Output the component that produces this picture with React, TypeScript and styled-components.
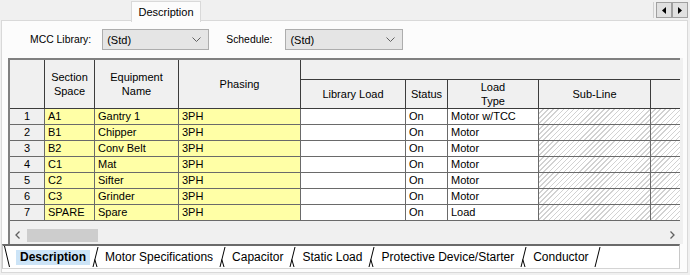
import styled, { createGlobalStyle } from 'styled-components';

const GlobalStyle = createGlobalStyle`
  html, body {
    margin: 0;
    padding: 0;
    background: #f0f0f0;
  }
  body {
    font-family: "Liberation Sans", Arial, sans-serif;
    font-size: 11px;
    color: #000;
  }
`;

const Screen = styled.div`
  width: 690px;
  height: 275px;
  overflow: hidden;
  background: #f0f0f0;
`;

// Top tab strip
const TopStrip = styled.div`
  height: 20px;
  display: flex;
  align-items: flex-start;
`;

const TopTab = styled.div`
  position: relative;
  z-index: 1;
  margin: 1px 0 0 131px;
  width: 70px;
  height: 21px;
  box-sizing: border-box;
  background: #fcfcfc;
  border: 1px solid #d9d9d9;
  border-bottom: none;
  display: flex;
  align-items: center;
  justify-content: center;
  font-size: 11px;
`;

const ScrollArrows = styled.div`
  margin: 2px 2px 0 auto;
  padding-left: 2px;
  display: flex;
  border-left: 1px solid #d0d0d0;
`;

const ArrowButton = styled.div`
  width: 16px;
  height: 16px;
  box-sizing: border-box;
  background: #e1e1e1;
  border: 1px solid #a0a0a0;
  display: flex;
  align-items: center;
  justify-content: center;
`;

// Panel
const Panel = styled.div`
  margin-left: 1px;
  width: 687px;
  height: 253px;
  box-sizing: border-box;
  background: #fcfcfc;
  border: 1px solid #d9d9d9;
  display: flex;
  flex-direction: column;
`;

const FilterRow = styled.div`
  display: flex;
  align-items: center;
  height: 21px;
  margin-top: 8px;
  padding-left: 28px;
`;

const FilterLabel = styled.span<{ $gap: number }>`
  font-size: 10.4px;
  margin-right: ${({ $gap }) => $gap}px;
`;

const Combo = styled.div<{ $width: number; $after?: number }>`
  width: ${({ $width }) => $width}px;
  height: 21px;
  box-sizing: border-box;
  margin-right: ${({ $after }) => $after ?? 0}px;
  padding: 0 7px 0 4px;
  background: #e5e5e5;
  border: 1px solid #adadad;
  display: flex;
  align-items: center;
  justify-content: space-between;
  font-size: 11px;
`;

// Grid
const GridFrame = styled.div`
  margin: 8px 0 0 6px;
  width: 675px;
  height: 186px;
  box-sizing: border-box;
  border-left: 2px solid #808080;
  background: #f0f0f0;
  display: flex;
  flex-direction: column;
`;

const TableClip = styled.div`
  width: 670px;
  overflow: hidden;
  border-top: 2px solid #808080;
`;

const Grid = styled.table`
  border-collapse: separate;
  border-spacing: 0;
  table-layout: fixed;
  width: 711px;
`;

const Col = styled.col<{ $w: number }>`
  width: ${({ $w }) => $w}px;
`;

const Head = styled.th`
  padding: 0;
  background: #f0f0f0;
  border-right: 1px solid #3c3c3c;
  border-bottom: 1px solid #3c3c3c;
  font-weight: normal;
  font-size: 11px;
`;

const HeadBox = styled.div<{ $h: number }>`
  height: ${({ $h }) => $h}px;
  display: flex;
  align-items: center;
  justify-content: center;
  text-align: center;
  line-height: 14px;
`;

type Fill = 'num' | 'yellow' | 'white' | 'hatch';

const fills: Record<Fill, string> = {
  num: '#f0f0f0',
  yellow: '#ffffa6',
  white: '#ffffff',
  hatch: 'repeating-linear-gradient(135deg, #ffffff 0 2.6px, #d2d2d2 2.6px 3.6px)',
};

const Cell = styled.td<{ $fill: Fill }>`
  padding: 0 3px;
  line-height: 15px;
  height: 15px;
  font-size: 11px;
  white-space: nowrap;
  overflow: hidden;
  text-align: ${({ $fill }) => ($fill === 'num' ? 'center' : 'left')};
  background: ${({ $fill }) => fills[$fill]};
  border-right: 1px solid #6a6a6a;
  border-bottom: 1px solid #6a6a6a;
`;

const GridGap = styled.div`
  flex: 1;
`;

const HScroll = styled.div`
  height: 18px;
  display: flex;
  align-items: center;
  padding: 0 8px 0 5px;
`;

const Thumb = styled.div`
  margin-left: 7px;
  width: 71px;
  height: 13px;
  background: #cdcdcd;
`;

const RightChevron = styled.svg`
  margin-left: auto;
`;

// Sheet tabs
const SheetBar = styled.div`
  width: 678px;
  height: 25px;
  box-sizing: border-box;
  background: #ffffff;
  border-top: 2px solid #6a6a6a;
  border-left: 1px solid #c8c8c8;
  border-right: 1px solid #c8c8c8;
  border-bottom: 1px solid #d4d4d4;
  display: flex;
  align-items: center;
  font-size: 12px;
`;

const SheetTab = styled.span<{ $active?: boolean }>`
  padding: 0 4px;
  height: 15px;
  line-height: 15px;
  font-weight: ${({ $active }) => ($active ? 700 : 400)};
  background: ${({ $active }) => ($active ? '#cce4f7' : 'transparent')};
`;

const TabGroup = styled.span`
  display: contents;
`;

const Edge = styled.svg`
  flex: none;
  display: block;
`;

function TabEdge({ kind }: { kind: 'start' | 'mid' | 'end' }) {
  if (kind === 'start') {
    return (
      <Edge width="13" height="22" viewBox="0 0 13 22">
        <path d="M1.5 0 L6.5 21" stroke="#000" fill="none" />
      </Edge>
    );
  }
  if (kind === 'end') {
    return (
      <Edge width="10" height="22" viewBox="0 0 10 22">
        <path d="M2 21 L7 1" stroke="#000" fill="none" />
      </Edge>
    );
  }
  return (
    <Edge width="11" height="22" viewBox="0 0 11 22">
      <path d="M3 21 L8 1 M4.8 13.5 L7 21" stroke="#000" fill="none" />
    </Edge>
  );
}

const rows = [
  ['1', 'A1', 'Gantry 1', '3PH', '', 'On', 'Motor w/TCC'],
  ['2', 'B1', 'Chipper', '3PH', '', 'On', 'Motor'],
  ['3', 'B2', 'Conv Belt', '3PH', '', 'On', 'Motor'],
  ['4', 'C1', 'Mat', '3PH', '', 'On', 'Motor'],
  ['5', 'C2', 'Sifter', '3PH', '', 'On', 'Motor'],
  ['6', 'C3', 'Grinder', '3PH', '', 'On', 'Motor'],
  ['7', 'SPARE', 'Spare', '3PH', '', 'On', 'Load'],
];

const colFills: Fill[] = ['num', 'yellow', 'yellow', 'yellow', 'white', 'white', 'white', 'hatch', 'hatch'];
const colWidths = [35, 50, 84, 122, 105, 42, 91, 112, 70];

const sheetTabs = [
  'Motor Specifications',
  'Capacitor',
  'Static Load',
  'Protective Device/Starter',
  'Conductor',
];

function Chevron() {
  return (
    <svg width="9" height="5" viewBox="0 0 9 5">
      <path d="M0.5 0.5 L4.5 4.5 L8.5 0.5" stroke="#606060" fill="none" />
    </svg>
  );
}

export default function App() {
  return (
    <Screen>
      <GlobalStyle />
      <TopStrip>
        <TopTab>Description</TopTab>
        <ScrollArrows>
          <ArrowButton>
            <svg width="4" height="7" viewBox="0 0 4 7">
              <path d="M4 0 L0 3.5 L4 7 Z" fill="#000" />
            </svg>
          </ArrowButton>
          <ArrowButton>
            <svg width="4" height="7" viewBox="0 0 4 7">
              <path d="M0 0 L4 3.5 L0 7 Z" fill="#000" />
            </svg>
          </ArrowButton>
        </ScrollArrows>
      </TopStrip>

      <Panel>
        <FilterRow>
          <FilterLabel $gap={11}>MCC Library:</FilterLabel>
          <Combo $width={107} $after={17}>
            (Std)
            <Chevron />
          </Combo>
          <FilterLabel $gap={13}>Schedule:</FilterLabel>
          <Combo $width={118}>
            (Std)
            <Chevron />
          </Combo>
        </FilterRow>

        <GridFrame>
          <TableClip>
            <Grid>
              <colgroup>
                {colWidths.map((w, i) => (
                  <Col key={i} $w={w} />
                ))}
              </colgroup>
              <thead>
                <tr>
                  <Head rowSpan={2}>
                    <HeadBox $h={48} />
                  </Head>
                  <Head rowSpan={2}>
                    <HeadBox $h={48}>
                      Section
                      <br />
                      Space
                    </HeadBox>
                  </Head>
                  <Head rowSpan={2}>
                    <HeadBox $h={48}>
                      Equipment
                      <br />
                      Name
                    </HeadBox>
                  </Head>
                  <Head rowSpan={2}>
                    <HeadBox $h={48}>Phasing</HeadBox>
                  </Head>
                  <Head colSpan={5}>
                    <HeadBox $h={19} />
                  </Head>
                </tr>
                <tr>
                  <Head>
                    <HeadBox $h={28}>Library Load</HeadBox>
                  </Head>
                  <Head>
                    <HeadBox $h={28}>Status</HeadBox>
                  </Head>
                  <Head>
                    <HeadBox $h={28}>
                      Load
                      <br />
                      Type
                    </HeadBox>
                  </Head>
                  <Head>
                    <HeadBox $h={28}>Sub-Line</HeadBox>
                  </Head>
                  <Head>
                    <HeadBox $h={28} />
                  </Head>
                </tr>
              </thead>
              <tbody>
                {rows.map((row) => (
                  <tr key={row[0]}>
                    {colFills.map((fill, i) => (
                      <Cell key={i} $fill={fill}>
                        {row[i] ?? ''}
                      </Cell>
                    ))}
                  </tr>
                ))}
              </tbody>
            </Grid>
          </TableClip>
          <GridGap />
          <HScroll>
            <svg width="5" height="8" viewBox="0 0 5 8">
              <path d="M4.5 0.5 L1 4 L4.5 7.5" stroke="#606060" strokeWidth="1.3" fill="none" />
            </svg>
            <Thumb />
            <RightChevron width="5" height="8" viewBox="0 0 5 8">
              <path d="M0.5 0.5 L4 4 L0.5 7.5" stroke="#606060" strokeWidth="1.3" fill="none" />
            </RightChevron>
          </HScroll>
        </GridFrame>

        <SheetBar>
          <TabEdge kind="start" />
          <SheetTab $active>Description</SheetTab>
          {sheetTabs.map((name) => (
            <TabGroup key={name}>
              <TabEdge kind="mid" />
              <SheetTab>{name}</SheetTab>
            </TabGroup>
          ))}
          <TabEdge kind="end" />
        </SheetBar>
      </Panel>
    </Screen>
  );
}
